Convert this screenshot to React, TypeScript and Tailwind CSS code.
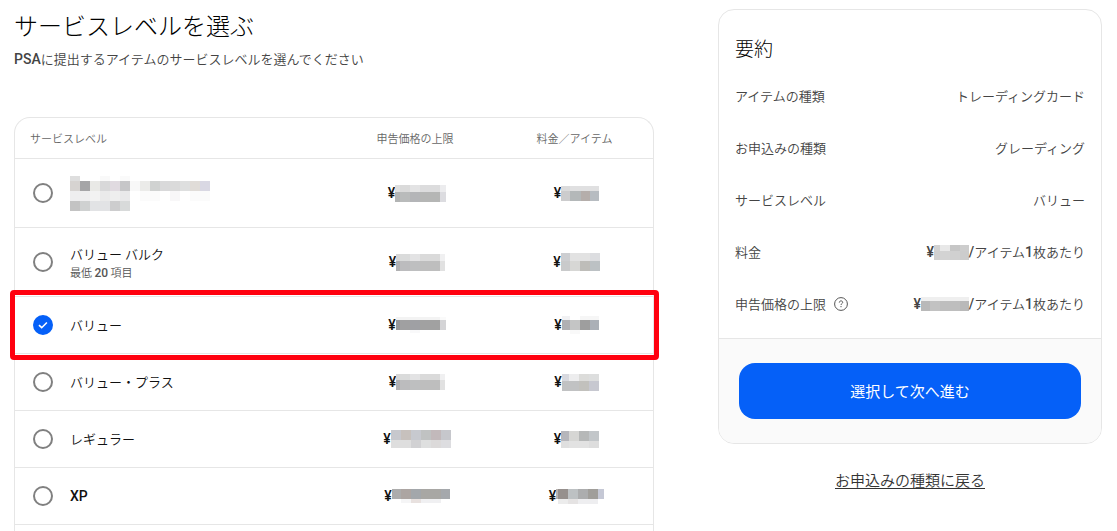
import React, { useState } from "react";
import { clsx } from "clsx";

type Cell = [number, string];
type Strip = [number, Cell[]];

// Redacted values are drawn as rows of blocks: [height, [[width, colour], ...]]
const NAME_BLUR: Strip[] = [
  [5, [[10, "#dedede"], [20, "#fff"], [10, "#f9f9f9"], [10, "#fff"], [10, "#fafafa"]]],
  [10, [[10, "#d6d3d1"], [10, "#a5a5a7"], [10, "#e9e9e6"], [10, "#d8d8d9"], [10, "#e0dae0"], [10, "#c6c6c8"], [10, "#f8f8f8"], [10, "#ebebe9"], [10, "#d0d2d1"], [10, "#d9d9da"], [10, "#dadada"], [10, "#dedfdf"], [10, "#e0dcd8"], [10, "#d9d8e3"]]],
  [10, [[20, "#eeeeef"], [10, "#f2f2f2"], [10, "#eaeaea"], [10, "#eeeeee"], [10, "#e9e9ea"], [10, "#fff"], [20, "#fbfbfb"], [10, "#fff"], [10, "#f8f7f8"], [10, "#fff"], [20, "#fbfbfb"]]],
  [10, [[10, "#c3c3c3"], [10, "#cfd1d1"], [20, "#e2e3e5"], [10, "#cdcdce"], [10, "#d8dada"]]],
];

const LEVELS = [
  {
    id: "bulk-dual",
    name: "",
    note: "",
    tall: true,
    limit: [
      [7, [[5, "#dedfdf"], [10, "#dadada"], [10, "#e3e3e4"], [20, "#dcdcdd"], [6, "#ececee"]]],
      [10, [[5, "#b2b4b4"], [10, "#b9bbbb"], [10, "#b4b5b8"], [20, "#b5b6b5"], [6, "#dcdce0"]]],
    ] as Strip[],
    fee: [
      [5, [[9, "#dbdbdc"], [29, "#e0e0e1"]]],
      [10, [[9, "#cccccd"], [11, "#b4b8b9"], [9, "#b5aeab"], [9, "#b7bcc1"]]],
    ] as Strip[],
  },
  {
    id: "bulk",
    name: "バリュー バルク",
    note: "20",
    tall: true,
    limit: [
      [7, [[4, "#d7d7d7"], [10, "#dadbdb"], [10, "#e3e3e4"], [20, "#dadada"], [5, "#f0f0f1"]]],
      [10, [[4, "#b0b0b2"], [10, "#bcbcbe"], [10, "#bebfc0"], [20, "#bebebe"], [5, "#e1e1e1"]]],
    ] as Strip[],
    fee: [
      [8, [[9, "#cdced1"], [20, "#e2e2e2"], [10, "#dcdde0"]]],
      [10, [[9, "#c9cacb"], [10, "#d7d7d5"], [10, "#bebdb9"], [10, "#bcc1c4"]]],
    ] as Strip[],
  },
  {
    id: "value",
    name: "バリュー",
    note: "",
    tall: false,
    limit: [
      [3, [[44, "#f3f3f3"], [6, "#fafafa"]]],
      [10, [[4, "#969698"], [10, "#a0a0a1"], [10, "#9fa0a4"], [20, "#a1a1a1"], [6, "#d4d4d6"]]],
      [3, [[14, "#fff"], [10, "#f9f9fa"], [26, "#fff"]]],
    ] as Strip[],
    fee: [
      [4, [[8, "#f1f1f3"], [10, "#fff"], [19, "#f6f6f6"]]],
      [10, [[8, "#b0b0b3"], [10, "#c4c5c5"], [10, "#9e9e9e"], [9, "#abb0b7"]]],
      [4, [[8, "#fff"], [10, "#f9f9f9"], [19, "#fff"]]],
    ] as Strip[],
  },
  {
    id: "value-plus",
    name: "バリュー・プラス",
    note: "",
    tall: false,
    limit: [
      [6, [[4, "#d7d7d7"], [10, "#dadbdb"], [10, "#e3e3e4"], [20, "#dadada"], [5, "#f0f0f1"]]],
      [10, [[4, "#b0b0b2"], [10, "#bcbcbe"], [10, "#bebfc0"], [20, "#bebebe"], [5, "#e1e1e1"]]],
    ] as Strip[],
    fee: [
      [7, [[7, "#d8d9df"], [10, "#ededee"], [10, "#dcdcda"], [10, "#dddede"]]],
      [10, [[17, "#c1c2c3"], [10, "#c2c1bd"], [10, "#c7c8d0"]]],
    ] as Strip[],
  },
  {
    id: "regular",
    name: "レギュラー",
    note: "",
    tall: false,
    limit: [
      [10, [[10, "#c7c8cd"], [10, "#c7c1bd"], [10, "#c7c9cf"], [10, "#c0c2c2"], [10, "#c2b9bb"], [10, "#c6c7cc"]]],
      [8, [[20, "#dedede"], [10, "#d1d1d3"], [10, "#dedfdf"], [10, "#dcdada"], [10, "#dddde0"]]],
    ] as Strip[],
    fee: [
      [10, [[8, "#b6b6bb"], [10, "#d6d6d4"], [10, "#b6b8b8"], [10, "#c2c6c9"]]],
      [7, [[8, "#dfdfdf"], [20, "#e2e2e2"], [10, "#dddddd"]]],
    ] as Strip[],
  },
  {
    id: "xp",
    name: "XP",
    note: "",
    tall: false,
    limit: [
      [10, [[9, "#acacac"], [10, "#aca5a2"], [10, "#a3a7ab"], [20, "#a8a7a4"], [9, "#a5a8ac"]]],
      [4, [[9, "#fff"], [10, "#f5f5f6"], [10, "#e8e1df"], [20, "#f0f0f2"], [9, "#fff"]]],
    ] as Strip[],
    fee: [
      [10, [[2, "#b8b3b0"], [10, "#96908d"], [10, "#bdc1c3"], [10, "#acadae"], [10, "#a09e9a"], [6, "#c5c8d5"]]],
      [5, [[2, "#fff"], [10, "#ececec"], [10, "#e5e3e3"], [20, "#eeeef0"], [6, "#fff"]]],
    ] as Strip[],
  },
];

const FEE_BLUR: Strip[] = [
  [6, [[6, "#d2d2d2"], [10, "#e8e8e8"], [10, "#c6c6c6"], [9, "#cdcdcd"]]],
  [9, [[6, "#d0d0d0"], [10, "#d3d3d3"], [10, "#d0d0d0"], [9, "#cccccc"]]],
];

const LIMIT_BLUR: Strip[] = [
  [4, [[48, "#efefef"]]],
  [10, [[9, "#b9b9b9"], [10, "#c2c2c2"], [20, "#bebebe"], [9, "#b9b9b9"]]],
];

const Mosaic = ({ strips }: { strips: Strip[] }) => {
  const width = Math.max(
    ...strips.map(([, cells]) => cells.reduce((sum, [w]) => sum + w, 0))
  );
  const height = strips.reduce((sum, [h]) => sum + h, 0);
  let y = 0;
  return (
    <svg
      width={width}
      height={height}
      shapeRendering="crispEdges"
      className="shrink-0"
      aria-hidden="true"
    >
      {strips.map(([h, cells], row) => {
        const top = y;
        y += h;
        let x = 0;
        return cells.map(([w, fill], col) => {
          const left = x;
          x += w;
          return (
            <rect
              key={`${row}-${col}`}
              x={left}
              y={top}
              width={w}
              height={h}
              fill={fill}
            />
          );
        });
      })}
    </svg>
  );
};

const Latin = ({ children }: { children: React.ReactNode }) => (
  <span className="font-['Roboto','Liberation_Sans',sans-serif] text-[14px] font-medium">
    {children}
  </span>
);

const Price = ({ strips }: { strips: Strip[] }) => (
  <div className="flex items-center justify-center leading-5">
    <Latin>¥</Latin>
    <Mosaic strips={strips} />
  </div>
);

const SummaryRow = ({
  label,
  children,
}: {
  label: React.ReactNode;
  children: React.ReactNode;
}) => (
  <div className="flex h-5 items-center justify-between text-[13px] leading-5 text-[#444]">
    <dt className="flex items-center gap-2">{label}</dt>
    <dd className="flex items-center">{children}</dd>
  </div>
);

const PerItem = ({ strips }: { strips: Strip[] }) => (
  <>
    <Latin>¥</Latin>
    <Mosaic strips={strips} />
    <span>
      <Latin>/</Latin>アイテム<Latin>1</Latin>枚あたり
    </span>
  </>
);

const App = () => {
  const [selected, setSelected] = useState("value");

  return (
    <main className="grid min-h-screen grid-cols-[5fr_3fr] gap-16 bg-white pt-[9px] pr-[15px] pl-[14px] font-['Noto_Sans_CJK_JP',sans-serif] font-[350] text-[#111]">
      <section className="flex flex-col">
        <h1 className="text-[24px] leading-8 font-light text-black">
          サービスレベルを選ぶ
        </h1>
        <p className="mt-2 h-5 text-[13px] leading-5 text-[#444]">
          <Latin>PSA</Latin>に提出するアイテムのサービスレベルを選んでください
        </p>

        <div className="mt-12 grow rounded-t-2xl border border-b-0 border-[#e6e6e6]">
          <table className="w-full table-fixed border-separate border-spacing-0">
            <thead>
              <tr className="h-[41px] text-[11px] leading-4 text-[#666]">
                <th className="w-[50%] border-b border-[#e6e6e6] pl-[15px] text-left font-[350]">
                  サービスレベル
                </th>
                <th className="w-[26%] border-b border-[#e6e6e6] pr-1 font-[350]">
                  申告価格の上限
                </th>
                <th className="w-[24%] border-b border-[#e6e6e6] pr-1 font-[350]">
                  料金／アイテム
                </th>
              </tr>
            </thead>
            <tbody>
              {LEVELS.map((level) => (
                <tr
                  key={level.id}
                  className={clsx("relative", level.tall ? "h-[69px]" : "h-[57px]")}
                >
                  <td className="border-b border-[#e6e6e6] pl-[18px]">
                    <label className="flex items-center gap-[17px]">
                      <span className="grid size-5 shrink-0 place-items-center">
                        <input
                          type="radio"
                          name="level"
                          aria-label={level.name || "サービスレベル"}
                          checked={selected === level.id}
                          onChange={() => setSelected(level.id)}
                          className="peer col-start-1 row-start-1 size-5 appearance-none rounded-full border-2 border-[#808080] checked:border-[#0560f8] checked:bg-[#0560f8]"
                        />
                        <svg
                          viewBox="0 0 20 20"
                          className="pointer-events-none z-10 col-start-1 row-start-1 hidden size-5 peer-checked:block"
                          fill="none"
                          stroke="#fff"
                          strokeWidth="1.6"
                        >
                          <path d="M6 10.1l2.7 2.6 5.2-5.2" />
                        </svg>
                      </span>
                      {level.name ? (
                        <span className="flex flex-col">
                          <span className="text-[13px] leading-5">
                            {level.id === "xp" ? (
                              <Latin>{level.name}</Latin>
                            ) : (
                              level.name
                            )}
                          </span>
                          {level.note && (
                            <span className="text-[11px] leading-4 text-[#555]">
                              最低{" "}
                              <span className="font-['Roboto','Liberation_Sans',sans-serif] text-[12px] font-medium">
                                {level.note}
                              </span>{" "}
                              項目
                            </span>
                          )}
                        </span>
                      ) : (
                        <Mosaic strips={NAME_BLUR} />
                      )}
                    </label>
                    {selected === level.id && (
                      <div className="pointer-events-none absolute -top-[7px] -right-[6px] -bottom-[6px] -left-[5px] rounded-sm border-[5px] border-[#ff000f]" />
                    )}
                  </td>
                  <td className="border-b border-[#e6e6e6]">
                    <Price strips={level.limit} />
                  </td>
                  <td className="border-b border-[#e6e6e6]">
                    <Price strips={level.fee} />
                  </td>
                </tr>
              ))}
            </tbody>
          </table>
        </div>
      </section>

      <aside>
        <div className="overflow-hidden rounded-2xl border border-[#e6e6e6]">
          <div className="px-4 py-6">
            <h2 className="text-[19px] leading-7 font-light text-black">要約</h2>
            <dl className="mt-6 flex flex-col gap-8">
              <SummaryRow label="アイテムの種類">トレーディングカード</SummaryRow>
              <SummaryRow label="お申込みの種類">グレーディング</SummaryRow>
              <SummaryRow label="サービスレベル">バリュー</SummaryRow>
              <SummaryRow label="料金">
                <PerItem strips={FEE_BLUR} />
              </SummaryRow>
              <SummaryRow
                label={
                  <>
                    申告価格の上限
                    <button type="button" aria-label="ヘルプ">
                      <svg
                        viewBox="0 0 14 14"
                        className="size-[14px]"
                        fill="none"
                        stroke="#555"
                      >
                        <circle cx="7" cy="7" r="6.4" />
                        <path d="M5.3 5.6c0-1 .7-1.7 1.7-1.7s1.7.6 1.7 1.5c0 1.2-1.7 1.2-1.7 2.6M7 9v1.2" />
                      </svg>
                    </button>
                  </>
                }
              >
                <PerItem strips={LIMIT_BLUR} />
              </SummaryRow>
            </dl>
          </div>
          <div className="border-t border-[#e6e6e6] bg-[#fafafa] px-5 py-6">
            <button
              type="button"
              className="h-14 w-full rounded-2xl bg-[#0560f8] text-[15px] font-normal text-white"
            >
              選択して次へ進む
            </button>
          </div>
        </div>
        <div className="mt-6 text-center text-[15px] leading-6">
          <a href="#" className="text-[#333] underline underline-offset-2">
            お申込みの種類に戻る
          </a>
        </div>
      </aside>
    </main>
  );
};

export default App;
